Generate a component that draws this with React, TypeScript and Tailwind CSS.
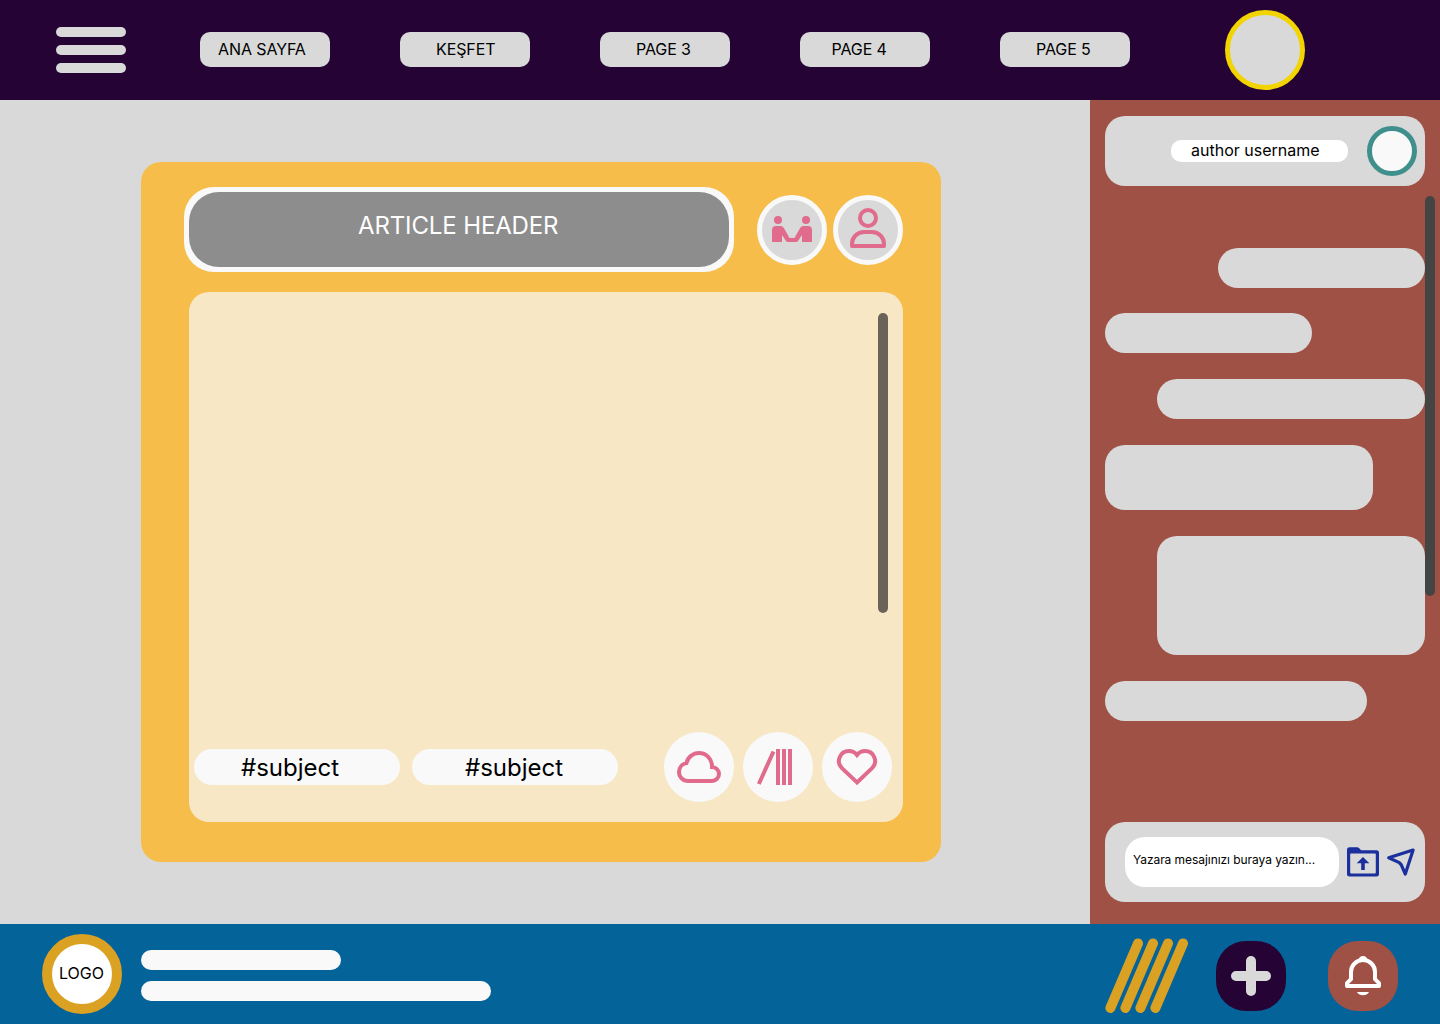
import React from "react";

const pages = [
  { label: "ANA SAYFA", pad: "pl-[18px]" },
  { label: "KEŞFET", pad: "pl-[36px]" },
  { label: "PAGE 3", pad: "pl-[36px]" },
  { label: "PAGE 4", pad: "pl-[31.5px]" },
  { label: "PAGE 5", pad: "pl-[36px]" },
];

const messages = [
  "self-end w-[207px] h-[40px]",
  "self-start mt-[25px] w-[207px] h-[40px]",
  "self-end mt-[26px] w-[268px] h-[40px]",
  "self-start mt-[26px] w-[268px] h-[65px]",
  "self-end mt-[26px] w-[268px] h-[119px]",
  "self-start mt-[26px] w-[262px] h-[40px]",
];

function Icon({ box, className, children }: { box: string; className: string; children: React.ReactNode }) {
  return (
    <svg viewBox={box} className={"block shrink-0 " + className} fill="none" aria-hidden="true">
      {children}
    </svg>
  );
}

function TopBar() {
  return (
    <header className="flex h-[100px] items-center bg-[#250435] pl-[56px]">
      <button className="flex w-[70px] flex-col gap-2" aria-label="Menu">
        <span className="h-[10px] rounded-full bg-[#d9d9d9]" />
        <span className="h-[10px] rounded-full bg-[#d9d9d9]" />
        <span className="h-[10px] rounded-full bg-[#d9d9d9]" />
      </button>
      <nav className="ml-[74px] flex gap-[70px] pb-px">
        {pages.map((p) => (
          <a key={p.label} className={"h-[35px] w-[130px] rounded-[10px] bg-[#d9d9d9] text-base leading-[35px] tracking-[-0.1px] whitespace-nowrap text-black " + p.pad}>
            {p.label}
          </a>
        ))}
      </nav>
      <div className="ml-[95px] size-20 rounded-full border-[5px] border-[#f2d400] bg-[#d9d9d9]" />
    </header>
  );
}

function ArticleCard() {
  return (
    <article className="h-[700px] w-[800px] rounded-[20px] bg-[#f6bd4a] pt-[25px] pl-[43px]">
      <div className="flex h-[85px] items-center">
        <div className="h-[85px] w-[550px] rounded-[30px] bg-[#f9f9f9] p-[5px]">
          <h1 className="h-[75px] rounded-[30px] bg-[#8d8d8d] pl-[169px] text-2xl leading-[67px] tracking-[-0.13px] text-white">ARTICLE HEADER</h1>
        </div>
        <Icon box="762 200 60 60" className="ml-[23px] size-[70px] rounded-full border-[5px] border-[#f9f9f9] bg-[#d9d9d9]">
          <g fill="#e16b8d">
            <circle cx="778" cy="220" r="4" />
            <circle cx="806" cy="220" r="4" />
            <path d="M772 242V230a4 4 0 0 1 4-4h4.5a4 4 0 0 1 3.4 2L789.5 238H794.5L800.1 228a4 4 0 0 1 3.4-2H808a4 4 0 0 1 4 4V242H802V235L798 241a2 2 0 0 1-1.7 1H787.7a2 2 0 0 1-1.7-1L782 235V242Z" />
          </g>
        </Icon>
        <Icon box="838 200 60 60" className="ml-1.5 size-[70px] rounded-full border-[5px] border-[#f9f9f9] bg-[#d9d9d9]">
          <g stroke="#e16b8d" strokeWidth="4" strokeLinejoin="round">
            <circle cx="868" cy="218" r="8" />
            <path d="M852 246V244a12 12 0 0 1 12-12h8a12 12 0 0 1 12 12V246Z" />
          </g>
        </Icon>
      </div>
      <section className="mt-5 ml-[5px] flex h-[530px] w-[714px] flex-col rounded-[20px] bg-[#f7e7c5] pt-[21px] pl-[5px]">
        <div className="mr-[15px] h-[300px] w-[10px] self-end rounded-full bg-[#6a635a]" />
        <div className="mt-[119px] flex items-center">
          <span className="h-9 w-[206px] rounded-full bg-[#f9f9f9] pl-[47px] text-2xl leading-[38px] text-black">#subject</span>
          <span className="ml-3 h-9 w-[206px] rounded-full bg-[#f9f9f9] pl-[53px] text-2xl leading-[38px] text-black">#subject</span>
          <Icon box="664 732 70 70" className="ml-[46px] size-[70px] rounded-full bg-[#f9f9f9]">
            <path d="M688 781A9 9 0 0 1 679 772A9 9 0 0 1 686.4 763.15A13 13 0 0 1 699 753A13 13 0 0 1 712 766V767A7 7 0 0 1 712 781Z" stroke="#e16b8d" strokeWidth="4" />
          </Icon>
          <Icon box="743 732 70 70" className="ml-[9px] size-[70px] rounded-full bg-[#f9f9f9]">
            <path d="M773.5 751.5L758.8 784M778 749v36M784 749v36M790 749v36" stroke="#e16b8d" strokeWidth="4" />
          </Icon>
          <Icon box="822 732 70 70" className="ml-[9px] size-[70px] rounded-full bg-[#f9f9f9]">
            <path d="M857 782.4L841.9 768.1A10 10 0 0 1 849 751A10 10 0 0 1 857 755A10 10 0 0 1 865 751A10 10 0 0 1 872.1 768.1Z" stroke="#e16b8d" strokeWidth="4" />
          </Icon>
        </div>
      </section>
    </article>
  );
}

function Chat() {
  return (
    <aside className="relative flex w-[350px] flex-col bg-[#a05145] px-[15px] pt-4">
      <div className="flex h-[70px] shrink-0 items-center rounded-[20px] bg-[#d9d9d9] pl-[66px]">
        <span className="h-[22px] w-[177px] rounded-[10px] bg-white pl-5 text-base leading-[21px] text-black">author username</span>
        <span className="ml-[19px] size-[50px] rounded-full border-[5px] border-[#3f908d] bg-[#f9f9f9]" />
      </div>
      <div className="mt-[62px] flex flex-col">
        {messages.map((m, i) => (
          <div key={i} className={"rounded-[20px] bg-[#d9d9d9] " + m} />
        ))}
      </div>
      <div className="absolute top-24 right-[5px] h-[400px] w-[10px] rounded-full bg-[#444444]" />
      <div className="mt-[101px] flex h-20 shrink-0 items-center rounded-[20px] bg-[#d9d9d9] pl-5">
        <div className="h-[50px] w-[214px] rounded-[20px] bg-white pl-2 text-xs leading-[46px] tracking-[-0.06px] whitespace-nowrap text-black">Yazara mesajınızı buraya yazın...</div>
        <Icon box="1346 844 34 36" className="ml-[7px] h-9 w-[34px]">
          <path fillRule="evenodd" d="M1349.5 847.2h7.8a2 2 0 0 1 1.4.6l2.5 2.4h15.3a2.5 2.5 0 0 1 2.5 2.5v21.4a2.5 2.5 0 0 1-2.5 2.5h-27a2.5 2.5 0 0 1-2.5-2.5V849.7a2.5 2.5 0 0 1 2.5-2.5ZM1351 853.6a.8.8 0 0 0-.8.8v18.2a.8.8 0 0 0 .8.8h24a.8.8 0 0 0 .8-.8v-18.2a.8.8 0 0 0-.8-.8Z" fill="#1b309c" />
          <path d="M1363 857l6.3 6.2h-4.5v6.8h-3.6v-6.8h-4.5Z" fill="#1b309c" />
        </Icon>
        <Icon box="1385 846 32 34" className="ml-[5px] h-[34px] w-8">
          <path d="M1413.1 851L1388.7 858.8L1399.3 863.6L1401.3 865.8L1405.3 875.1Z" stroke="#1b309c" strokeWidth="3.2" strokeLinejoin="round" />
        </Icon>
      </div>
    </aside>
  );
}

function BottomBar() {
  return (
    <footer className="flex h-[100px] items-center bg-[#046399] pl-[42px]">
      <div className="size-20 rounded-full border-[10px] border-[#daa123] bg-white text-center text-base leading-[59px] whitespace-nowrap text-black">
        <span className="-ml-px">LOGO</span>
      </div>
      <div className="ml-[19px] flex w-[350px] flex-col gap-[11px] pt-[3px]">
        <span className="h-5 w-[200px] rounded-full bg-[#f9f9f9]" />
        <span className="h-5 rounded-full bg-[#f9f9f9]" />
      </div>
      <Icon box="1104 936 86 80" className="ml-[613px] mt-1 h-20 w-[86px]">
        <path d="M1138 943.4L1110.4 1008M1153 943.4L1125.4 1008M1168 943.4L1140.4 1008M1183 943.4L1155.4 1008" stroke="#daa123" strokeWidth="10" strokeLinecap="round" />
      </Icon>
      <Icon box="1216 941 70 70" className="mt-1 ml-[26px] size-[70px] rounded-[30px] bg-[#250435]">
        <path d="M1236 976H1266M1251 961V991" stroke="#d9d9d9" strokeWidth="10" strokeLinecap="round" />
      </Icon>
      <Icon box="1328 941 70 70" className="mt-1 ml-[42px] size-[70px] rounded-[30px] bg-[#a05145]">
        <path d="M1351 972V979.2L1347 983.2V986H1379V983.2L1375 979.2V972A12 12 0 0 0 1351 972Z" stroke="#fff" strokeWidth="4" strokeLinejoin="round" />
        <path d="M1358.5 960a4.5 4 0 0 1 9 0ZM1357 992h12a6.2 4.2 0 0 1-12 0Z" fill="#fff" />
      </Icon>
    </footer>
  );
}

export default function App() {
  return (
    <div className="flex h-[1024px] w-[1440px] flex-col overflow-hidden bg-[#d9d9d9] font-['Inter',sans-serif]">
      <TopBar />
      <div className="flex h-[824px]">
        <main className="w-[1090px] pt-[62px] pl-[141px]">
          <ArticleCard />
        </main>
        <Chat />
      </div>
      <BottomBar />
    </div>
  );
}
